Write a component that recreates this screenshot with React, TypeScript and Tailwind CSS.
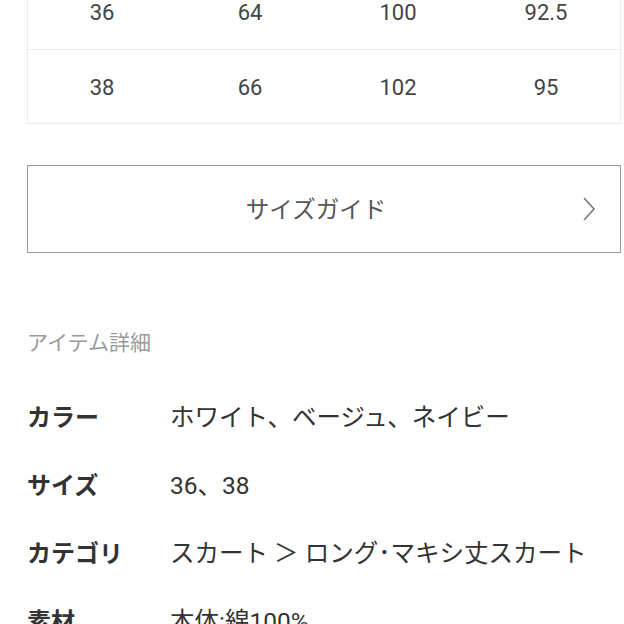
import React from 'react';

const sizeRows = [
  ['36', '64', '100', '92.5'],
  ['38', '66', '102', '95'],
];

const details = [
  { label: 'カラー', value: 'ホワイト、ベージュ、ネイビー' },
  { label: 'サイズ', value: '36、38' },
  { label: 'カテゴリ', value: 'スカート ＞ ロング･マキシ丈スカート' },
  { label: '素材', value: '本体:綿100%' },
];

export default function App() {
  return (
    <div
      className="w-[624px] h-[624px] overflow-hidden bg-white pl-[27px] pr-[3px]"
      style={{ fontFamily: "Roboto, 'Noto Sans CJK JP', sans-serif" }}
    >
      {/* Size table (top is scrolled off) */}
      <div className="-mt-[26px] border border-[#ececec]">
        {sizeRows.map((row, i) => (
          <div
            key={i}
            className={`grid grid-cols-4 h-[74px] items-center text-[22px] text-[#444] ${
              i > 0 ? 'border-t border-[#ececec] pt-[2px]' : ''
            }`}
          >
            {row.map((cell, j) => (
              <div key={j} className="text-center">
                {cell}
              </div>
            ))}
          </div>
        ))}
      </div>

      {/* Size guide button */}
      <div className="mt-[41px] h-[88px] border border-[#9a9a9a] relative flex items-center justify-center pr-[16px] pt-[4px]">
        <span className="text-[23.5px] text-[#555]">サイズガイド</span>
        <svg
          className="absolute right-[24px] top-1/2 -translate-y-1/2"
          width="14"
          height="26"
          viewBox="0 0 14 26"
          fill="none"
        >
          <path d="M2 2 L12 13 L2 24" stroke="#777" strokeWidth="1.6" />
        </svg>
      </div>

      {/* Item details */}
      <div className="mt-[77px] text-[21px] text-[#9a9a9a] leading-[26px]">アイテム詳細</div>

      <div className="mt-[47px] flex flex-col gap-[38px]">
        {details.map((d) => (
          <div key={d.label} className="flex items-center leading-[30px]">
            <div className="w-[143px] shrink-0 text-[24px] font-bold text-[#333]">{d.label}</div>
            <div className="text-[24.5px] text-[#333]">{d.value}</div>
          </div>
        ))}
      </div>
    </div>
  );
}
